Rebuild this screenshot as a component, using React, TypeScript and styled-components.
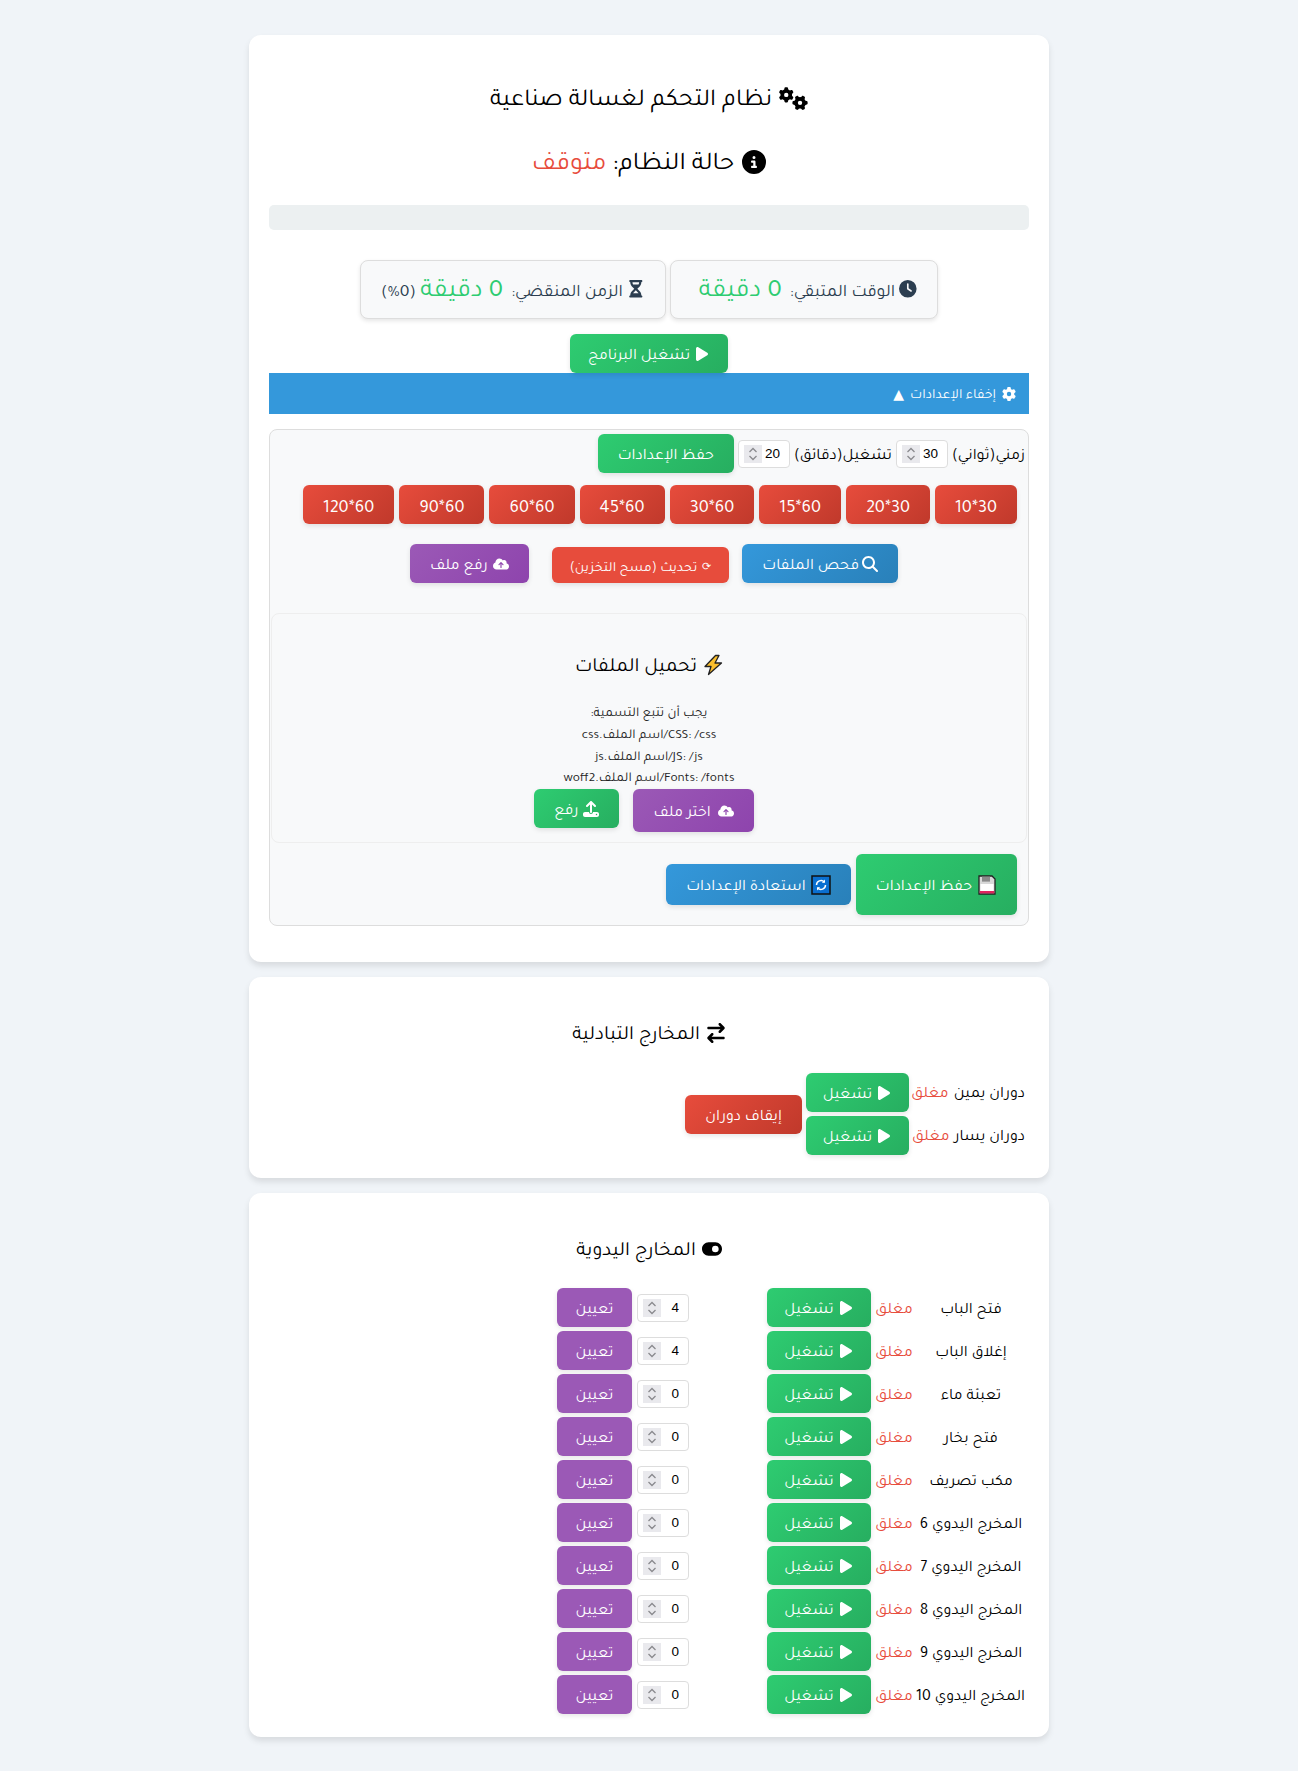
import styled, { createGlobalStyle } from "styled-components";
import {
  FaArrowRightArrowLeft,
  FaCircleInfo,
  FaClock,
  FaCloudArrowUp,
  FaGear,
  FaGears,
  FaHourglassHalf,
  FaMagnifyingGlass,
  FaPlay,
  FaToggleOn,
  FaUpload,
} from "react-icons/fa6";

const spinner = encodeURIComponent(
  `<svg xmlns="http://www.w3.org/2000/svg" width="18" height="18"><rect width="18" height="18" fill="#e9e9ed"/><path d="M5.5 7 9 3.5 12.5 7M5.5 11 9 14.5 12.5 11" fill="none" stroke="#8a8a8e" stroke-width="1.3"/></svg>`
);

const GlobalStyle = createGlobalStyle`
  * { box-sizing: border-box; }
  body {
    margin: 0;
    background: #f0f4f8;
    font-family: Tajawal, "Noto Sans", Roboto, sans-serif;
    color: #000;
  }
  svg { width: auto; }
  input[type="number"]::-webkit-inner-spin-button {
    -webkit-appearance: none;
    opacity: 1;
    width: 18px;
    height: 18px;
    margin-left: 0;
    background: url("data:image/svg+xml,${spinner}") no-repeat center;
  }
`;

const Page = styled.div`
  direction: rtl;
  width: 800px;
  margin: 0 auto;
  padding: 35px 0;
  display: flex;
  flex-direction: column;
  gap: 15px;
`;

const Card = styled.section`
  background: #fff;
  border-radius: 12px;
  padding: 20px;
  box-shadow: 0 4px 6px rgba(0, 0, 0, 0.1);
`;

const Title = styled.h1`
  display: flex;
  justify-content: center;
  align-items: center;
  gap: 7px;
  height: 36px;
  margin: 25px 0 0;
  padding-top: 8px;
  font-size: 24.4px;
  font-weight: 400;
  white-space: nowrap;

  svg {
    margin-bottom: 8px;
    font-size: 29px;
  }
`;

const Status = styled.h2`
  display: flex;
  justify-content: center;
  align-items: center;
  gap: 8px;
  height: 36px;
  margin: 28px 0 0;
  padding-top: 8px;
  font-size: 25.6px;
  font-weight: 400;
  white-space: nowrap;

  svg {
    margin-bottom: 8px;
    font-size: 24px;
  }
`;

const Off = styled.span`
  color: #e74c3c;
`;

const ProgressTrack = styled.div`
  height: 25px;
  margin-top: 25px;
  background: #ecf0f1;
  border-radius: 5px;
`;

const Timers = styled.div`
  display: flex;
  justify-content: center;
  gap: 4px;
  margin-top: 30px;
`;

const TimerCard = styled.div`
  height: 59px;
  padding: 0 20px;
  line-height: 62px;
  background: #f8f9fa;
  border: 1px solid #ddd;
  border-radius: 8px;
  box-shadow: 0 2px 4px rgba(0, 0, 0, 0.1);
  color: #2c3e50;
  font-size: 17.6px;
  white-space: nowrap;

  svg {
    vertical-align: -2px;
  }
`;

const TimerValue = styled.span<{ $tail?: boolean }>`
  color: #2ecc71;
  font-size: 26px;
  margin: ${({ $tail }) => ($tail ? "0 8px 0 0" : "0 8px")};
`;

const Center = styled.div`
  display: flex;
  justify-content: center;
  margin-top: 15px;
`;

const Button = styled.button<{ $tone?: "green" | "red" | "blue" | "purple"; $flat?: boolean }>`
  display: inline-flex;
  align-items: center;
  justify-content: center;
  gap: 5px;
  height: 39px;
  padding: 8px 20px 0;
  border: 0;
  border-radius: 6px;
  font: inherit;
  font-size: 16px;
  color: #fff;
  white-space: nowrap;
  box-shadow: 0 2px 5px rgba(0, 0, 0, 0.1);
  background: ${({ $tone = "green", $flat }) => {
    const tones = {
      green: ["#2ecc71", "#27ae60"],
      red: ["#e74c3c", "#c0392b"],
      blue: ["#3498db", "#2980b9"],
      purple: ["#9b59b6", "#8e44ad"],
    };
    const [a, b] = tones[$tone];
    return $flat ? a : `linear-gradient(135deg, ${a}, ${b})`;
  }};

  svg {
    margin-bottom: 8px;
  }
`;

const ProgramButton = styled(Button)`
  padding-inline: 18px;
  gap: 4px;
`;

const SettingsBar = styled.div`
  display: flex;
  align-items: center;
  gap: 6px;
  height: 41px;
  padding: 6px 13px 0;
  background: #3498db;
  color: #fff;
  font-size: 14px;

  svg {
    margin-bottom: 6px;
  }
`;

const Caret = styled.span`
  font-family: "DejaVu Sans", sans-serif;
  font-size: 14px;
  margin-bottom: 6px;
`;

const Panel = styled.div`
  margin: 15px 0 16px;
  padding: 4px 0 10px;
  background: #f8f9fa;
  border: 1px solid #ddd;
  border-radius: 8px;
`;

const TimingRow = styled.div`
  display: flex;
  align-items: center;
  gap: 4px;
  padding-right: 3px;
  font-size: 16px;
`;

const TimingLabel = styled.span`
  padding-top: 8px;
  white-space: nowrap;
`;

const NumberBox = styled.input`
  width: 52px;
  height: 28px;
  padding: 0 9px 0 5px;
  border: 1px solid #ddd;
  border-radius: 4px;
  background: #fff;
  font-family: "Liberation Sans", sans-serif;
  font-size: 13.5px;
  text-align: right;
`;

const Presets = styled.div`
  display: flex;
  gap: 5px;
  margin: 12px 11px 0 0;
`;

const Preset = styled(Button)`
  font-size: 18.2px;
`;

const FileActions = styled.div`
  display: flex;
  justify-content: center;
  align-items: flex-end;
  gap: 13px;
  margin-top: 20px;
  padding-left: 10px;
`;

const RefreshButton = styled(Button)`
  height: 36px;
  padding-inline: 18px;
  margin-left: 10px;
  font-size: 14px;
`;

const RefreshGlyph = styled.span`
  font-size: 11px;
  margin-bottom: 4px;
`;

const ScanButton = styled(Button)`
  gap: 0;
  padding-inline: 20px;

  svg {
    margin-left: 3px;
  }
`;

const UploadBox = styled.div`
  margin: 30px 1px 0;
  height: 230px;
  padding-top: 36px;
  border: 1px solid #eee;
  border-radius: 8px;
  text-align: center;
`;

const SectionTitle = styled.h3`
  display: flex;
  justify-content: center;
  align-items: center;
  gap: 6px;
  height: 30px;
  margin: 0;
  padding-top: 6px;
  font-size: 20px;
  font-weight: 400;

  svg {
    margin-bottom: 6px;
  }
`;

const CardTitle = styled(SectionTitle)`
  margin-top: 21px;
`;

const Hint = styled.p`
  height: 86px;
  margin: 22px 0 0;
  padding-top: 2px;
  font-size: 13.4px;
  line-height: 21.8px;
  color: #222;
`;

const UploadActions = styled.div`
  display: flex;
  justify-content: center;
  align-items: flex-start;
  gap: 14px;
  margin-top: 1px;
  padding-right: 10px;
`;

const ChooseFile = styled(Button)`
  height: 43px;
  gap: 7px;
`;

const SaveActions = styled.div`
  display: flex;
  align-items: center;
  gap: 5px;
  margin: 11px 11px 0 0;
`;

const SaveBig = styled(Button)`
  height: 61px;
`;

const RestoreButton = styled(Button)`
  height: 41px;
`;

const EmojiIcon = styled.svg`
  width: 20px;
  height: 22px;
  flex: none;
`;

const Rotation = styled.div`
  display: grid;
  grid-template-columns: 116px 103px 115px;
  align-items: center;
  gap: 4px;
  margin: 25px 0 3px;
  justify-content: start;
`;

const RowLabel = styled.span`
  display: flex;
  gap: 5px;
  padding: 5px 4px 0 0;
  font-size: 16px;
  white-space: nowrap;
`;

const StopCell = styled.div`
  grid-column: 3;
  grid-row: 1 / span 2;
`;

const Manual = styled.div`
  display: flex;
  flex-direction: column;
  gap: 4px;
  margin: 24px 0 3px;
`;

const ManualRow = styled.div`
  display: grid;
  grid-template-columns: 112px 46px 104px 78px 52px 75px;
  align-items: center;
  font-size: 16px;
`;

const ManualName = styled.span`
  padding: 8px 4px 0 0;
  text-align: center;
  white-space: nowrap;
`;

const ManualState = styled(ManualName)`
  padding-right: 0;
  color: #e74c3c;
`;

const RunButton = styled(Button)`
  width: 100%;
  padding-inline: 0;
  gap: 4px;
`;

const AssignInput = styled(NumberBox)`
  grid-column: 5;
`;

const AssignButton = styled(Button)`
  margin-right: 5px;
  width: 75px;
  padding-inline: 0;
`;

const presets = ["30*10", "30*20", "60*15", "60*30", "60*45", "60*60", "60*90", "60*120"];

const outputs: [string, number][] = [
  ["فتح الباب", 4],
  ["إغلاق الباب", 4],
  ["تعبئة ماء", 0],
  ["فتح بخار", 0],
  ["مكب تصريف", 0],
  ["المخرج اليدوي 6", 0],
  ["المخرج اليدوي 7", 0],
  ["المخرج اليدوي 8", 0],
  ["المخرج اليدوي 9", 0],
  ["المخرج اليدوي 10", 0],
];

const Run = () => (
  <RunButton>
    <FaPlay /> تشغيل
  </RunButton>
);

const BoltIcon = () => (
  <EmojiIcon viewBox="0 0 20 22">
    <path d="M12.5 1.5 2 12.5h6L5.5 20.5 18.5 9h-6.5l4-7.5z" fill="#fbbf2d" stroke="#222" strokeWidth="1.3" strokeLinejoin="round" />
  </EmojiIcon>
);

const FloppyIcon = () => (
  <EmojiIcon viewBox="0 0 20 22">
    <path d="M2 2h13l3 3v15H2z" fill="#d8d8d8" stroke="#222" strokeWidth="1.3" />
    <rect x="5" y="2.6" width="8" height="5" fill="#8a8a8a" />
    <rect x="3.5" y="10" width="13" height="7" fill="#fff" />
    <rect x="2.7" y="17" width="14.6" height="2.4" fill="#e0245e" />
  </EmojiIcon>
);

const RefreshIcon = () => (
  <EmojiIcon viewBox="0 0 20 22">
    <rect x="1" y="2" width="18" height="18" fill="#0a6fd0" stroke="#111" strokeWidth="1.5" />
    <path d="M5.5 11a4.5 4.5 0 0 1 7.8-3M14.5 11a4.5 4.5 0 0 1-7.8 3" fill="none" stroke="#fff" strokeWidth="1.5" />
    <path d="M14 5.5v3.2h-3.2zM6 16.5v-3.2h3.2z" fill="#fff" />
  </EmojiIcon>
);

export default function App() {
  return (
    <>
      <GlobalStyle />
      <Page>
        <Card>
          <Title>
            <FaGears /> نظام التحكم لغسالة صناعية
          </Title>
          <Status>
            <FaCircleInfo />
            <span>
              حالة النظام: <Off>متوقف</Off>
            </span>
          </Status>
          <ProgressTrack />
          <Timers>
            <TimerCard>
              <FaClock /> الوقت المتبقي:
              <TimerValue>0 دقيقة</TimerValue>
            </TimerCard>
            <TimerCard>
              <FaHourglassHalf /> الزمن المنقضي:
              <TimerValue $tail>0 دقيقة</TimerValue> (0%)
            </TimerCard>
          </Timers>
          <Center>
            <ProgramButton>
              <FaPlay /> تشغيل البرنامج
            </ProgramButton>
          </Center>
          <SettingsBar>
            <FaGear /> إخفاء الإعدادات <Caret>▲</Caret>
          </SettingsBar>
          <Panel>
            <TimingRow>
              <TimingLabel>زمني(ثواني)</TimingLabel>
              <NumberBox type="number" defaultValue={30} />
              <TimingLabel>تشغيل(دقائق)</TimingLabel>
              <NumberBox type="number" defaultValue={20} />
              <Button>حفظ الإعدادات</Button>
            </TimingRow>
            <Presets>
              {presets.map((p) => (
                <Preset key={p} $tone="red">
                  {p}
                </Preset>
              ))}
            </Presets>
            <FileActions>
              <ScanButton $tone="blue">
                <FaMagnifyingGlass /> فحص الملفات
              </ScanButton>
              <RefreshButton $tone="red" $flat>
                <RefreshGlyph>⟳</RefreshGlyph> تحديث (مسح التخزين)
              </RefreshButton>
              <Button $tone="purple">
                <FaCloudArrowUp /> رفع ملف
              </Button>
            </FileActions>
            <UploadBox>
              <SectionTitle>
                <BoltIcon /> تحميل الملفات
              </SectionTitle>
              <Hint>
                يجب أن تتبع التسمية:
                <br />
                CSS: /css/اسم الملف.css
                <br />
                JS: /js/اسم الملف.js
                <br />
                Fonts: /fonts/اسم الملف.woff2
              </Hint>
              <UploadActions>
                <ChooseFile $tone="purple">
                  <FaCloudArrowUp /> اختر ملف
                </ChooseFile>
                <Button>
                  <FaUpload /> رفع
                </Button>
              </UploadActions>
            </UploadBox>
            <SaveActions>
              <SaveBig>
                <FloppyIcon /> حفظ الإعدادات
              </SaveBig>
              <RestoreButton $tone="blue">
                <RefreshIcon /> استعادة الإعدادات
              </RestoreButton>
            </SaveActions>
          </Panel>
        </Card>
        <Card>
          <CardTitle>
            <FaArrowRightArrowLeft /> المخارج التبادلية
          </CardTitle>
          <Rotation>
            <RowLabel>
              دوران يمين <Off>مغلق</Off>
            </RowLabel>
            <Run />
            <StopCell>
              <Button $tone="red">إيقاف دوران</Button>
            </StopCell>
            <RowLabel>
              دوران يسار <Off>مغلق</Off>
            </RowLabel>
            <Run />
          </Rotation>
        </Card>
        <Card>
          <CardTitle>
            <FaToggleOn /> المخارج اليدوية
          </CardTitle>
          <Manual>
            {outputs.map(([name, value]) => (
              <ManualRow key={name}>
                <ManualName>{name}</ManualName>
                <ManualState>مغلق</ManualState>
                <Run />
                <AssignInput type="number" defaultValue={value} />
                <AssignButton $tone="purple" $flat>
                  تعيين
                </AssignButton>
              </ManualRow>
            ))}
          </Manual>
        </Card>
      </Page>
    </>
  );
}
